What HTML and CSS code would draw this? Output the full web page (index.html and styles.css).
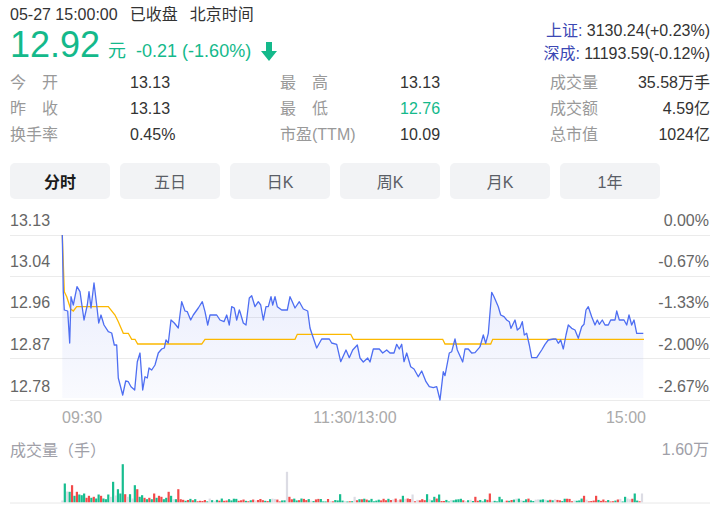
FILE: index.html
```html
<!DOCTYPE html>
<html lang="zh-CN">
<head>
<meta charset="utf-8">
<title>分时</title>
<link rel="stylesheet" href="styles.css">
</head>
<body>
<header class="head">
  <div class="head-left">
    <div class="status"><span>05-27 15:00:00</span><span class="gap">已收盘</span><span class="gap">北京时间</span></div>
    <div class="price-row">
      <span class="price">12.92</span><span class="unit">元</span><span class="change">-0.21 (-1.60%)</span>
      <svg class="arrow" width="16" height="19" viewBox="0 0 16 19"><path d="M5 0h6v9h5l-8 10l-8-10h5z"/></svg>
    </div>
  </div>
  <div class="head-right">
    <div><span class="idx">上证:</span> 3130.24(+0.23%)</div>
    <div><span class="idx">深成:</span> 11193.59(-0.12%)</div>
  </div>
</header>

<div class="stats">
  <span class="label">今&#12288;开</span><span class="value">13.13</span>
  <span class="label">最&#12288;高</span><span class="value">13.13</span>
  <span class="label">成交量</span><span class="value end">35.58万手</span>
  <span class="label">昨&#12288;收</span><span class="value">13.13</span>
  <span class="label">最&#12288;低</span><span class="value down">12.76</span>
  <span class="label">成交额</span><span class="value end">4.59亿</span>
  <span class="label">换手率</span><span class="value">0.45%</span>
  <span class="label">市盈(TTM)</span><span class="value">10.09</span>
  <span class="label">总市值</span><span class="value end">1024亿</span>
</div>

<nav class="tabs">
  <div class="tab active">分时</div>
  <div class="tab">五日</div>
  <div class="tab">日K</div>
  <div class="tab">周K</div>
  <div class="tab">月K</div>
  <div class="tab">1年</div>
</nav>

<svg class="chart" width="726" height="311" viewBox="0 205 726 311">
  <defs>
    <linearGradient id="areaFill" x1="0" y1="0" x2="0" y2="1">
      <stop offset="0" stop-color="#4664eb" stop-opacity="0.14"/>
      <stop offset="1" stop-color="#4664eb" stop-opacity="0.03"/>
    </linearGradient>
  </defs>
  <g class="grid">
    <line x1="10" y1="235.5" x2="710" y2="235.5"/>
    <line x1="10" y1="276.5" x2="710" y2="276.5"/>
    <line x1="10" y1="317.5" x2="710" y2="317.5"/>
    <line x1="10" y1="358.5" x2="710" y2="358.5"/>
    <line x1="10" y1="400.5" x2="710" y2="400.5"/>
  </g>
  <polygon class="area" points="62.3,235 63.3,291.7 64.3,310 67.7,311 69.7,343 71,296.7 73.3,305 77,286.7 80,291.7 84,320 87.3,305 89,291.7 91,308 94,283 96.7,305 98.7,323 101,315 104,325 108.3,331.7 111.7,333 114.3,345 116.7,345 118.3,378 122.7,395 125.7,381 128.3,381.7 131,386.7 134.7,390 137.3,361.7 140,353 142.7,390 145,376.7 147.3,378 149,368 151.7,370 155,365 158.3,353 161.7,349 164.3,348 166,340 168.3,343 171,320 174.3,323 178.3,328 181.7,301.7 185,311 187.3,311.7 190.7,320 193.3,315 198.3,308 202.3,301.7 205,311.7 207.7,325 210,315 216.7,315 220,320 224,321.7 226.7,315 229.3,325 231.7,306.7 234.3,308 236.7,320 239.3,310 240,311.7 243.3,323 246,325 249.3,298 251.7,295.7 255,306.7 258.3,301.7 260.7,305 263.3,320 266,306.7 268.3,306.7 271,296.7 272.7,305 275,296.7 277.3,306.7 281.7,310 287.3,310 290,296.7 292.3,301.7 295,308 299.3,301.7 303.3,309 307.7,311 310,328 312.3,335 316.7,348 321.7,339 329.3,339 331.7,343 336.7,344.3 340.7,361.7 346,350 349.3,357.7 352.7,350 357.3,345 360,358 363.3,362 367.7,358 370,362 373.3,349 379.3,349 382.7,353 386.7,350 390,353 394,353 396.7,344.3 399.3,349 401.7,344.3 404,361.7 406.7,353 410.7,366.7 414,369 418.3,376.7 421.7,371 426,381.7 429.3,386.7 433.3,387.7 436.7,386.7 440,400 443.3,371.7 445,375.7 449.3,353 451.7,351.7 455,339 457.3,350 462.7,362 465,349 468.3,349 471.7,353 475,352.7 479.3,347.7 480,346.7 483.3,335 485.7,343.3 488.3,333.3 491.7,292.3 494,296.7 498.3,306.7 500.7,315 504,316.7 506.7,320 509.3,321.7 511,328.3 515,320 517.3,330 520,327.7 522.3,321.7 524.3,335 526.7,333.3 529.3,345 531.7,357.7 536.7,357.7 541.7,350 545,344.3 548.3,340 553.3,339 556,339 558.3,343.3 560.7,340 563.3,349 566,335 568.3,325 571.7,328.3 575,330 578.3,338.3 581.7,326.7 584,324.3 586,310 588.3,306.7 591.7,316.7 595,325 597.3,320 599.3,324.3 602.3,320 605,325 608.3,325 610.7,320 615,320 616.7,311 619.3,320 624,320 626.7,325 629,315 631.7,325 634,320 636.7,333.3 643.3,333.3 643.3,398 62.3,398"/>
  <polyline class="avg" points="62.3,235 64.3,291.7 66.7,296.7 70.7,309 73.3,311 76.7,306.7 108.3,306.7 115,315 118.3,321.7 123.3,333.3 128.3,333.3 131.7,339.3 135,339.3 137.7,344 201.7,344 205,339.3 295,339.3 297.3,334.3 350.7,334.3 353.3,339.3 442.7,339.3 445,344 490.7,344 492.7,339.3 644,339.3"/>
  <polyline class="line" points="62.3,235 63.3,291.7 64.3,310 67.7,311 69.7,343 71,296.7 73.3,305 77,286.7 80,291.7 84,320 87.3,305 89,291.7 91,308 94,283 96.7,305 98.7,323 101,315 104,325 108.3,331.7 111.7,333 114.3,345 116.7,345 118.3,378 122.7,395 125.7,381 128.3,381.7 131,386.7 134.7,390 137.3,361.7 140,353 142.7,390 145,376.7 147.3,378 149,368 151.7,370 155,365 158.3,353 161.7,349 164.3,348 166,340 168.3,343 171,320 174.3,323 178.3,328 181.7,301.7 185,311 187.3,311.7 190.7,320 193.3,315 198.3,308 202.3,301.7 205,311.7 207.7,325 210,315 216.7,315 220,320 224,321.7 226.7,315 229.3,325 231.7,306.7 234.3,308 236.7,320 239.3,310 240,311.7 243.3,323 246,325 249.3,298 251.7,295.7 255,306.7 258.3,301.7 260.7,305 263.3,320 266,306.7 268.3,306.7 271,296.7 272.7,305 275,296.7 277.3,306.7 281.7,310 287.3,310 290,296.7 292.3,301.7 295,308 299.3,301.7 303.3,309 307.7,311 310,328 312.3,335 316.7,348 321.7,339 329.3,339 331.7,343 336.7,344.3 340.7,361.7 346,350 349.3,357.7 352.7,350 357.3,345 360,358 363.3,362 367.7,358 370,362 373.3,349 379.3,349 382.7,353 386.7,350 390,353 394,353 396.7,344.3 399.3,349 401.7,344.3 404,361.7 406.7,353 410.7,366.7 414,369 418.3,376.7 421.7,371 426,381.7 429.3,386.7 433.3,387.7 436.7,386.7 440,400 443.3,371.7 445,375.7 449.3,353 451.7,351.7 455,339 457.3,350 462.7,362 465,349 468.3,349 471.7,353 475,352.7 479.3,347.7 480,346.7 483.3,335 485.7,343.3 488.3,333.3 491.7,292.3 494,296.7 498.3,306.7 500.7,315 504,316.7 506.7,320 509.3,321.7 511,328.3 515,320 517.3,330 520,327.7 522.3,321.7 524.3,335 526.7,333.3 529.3,345 531.7,357.7 536.7,357.7 541.7,350 545,344.3 548.3,340 553.3,339 556,339 558.3,343.3 560.7,340 563.3,349 566,335 568.3,325 571.7,328.3 575,330 578.3,338.3 581.7,326.7 584,324.3 586,310 588.3,306.7 591.7,316.7 595,325 597.3,320 599.3,324.3 602.3,320 605,325 608.3,325 610.7,320 615,320 616.7,311 619.3,320 624,320 626.7,325 629,315 631.7,325 634,320 636.7,333.3 643.3,333.3"/>
  <g class="axis">
    <text x="10" y="226">13.13</text>
    <text x="10" y="267">13.04</text>
    <text x="10" y="308">12.96</text>
    <text x="10" y="350">12.87</text>
    <text x="10" y="391.5">12.78</text>
  </g>
  <g class="axis end">
    <text x="709" y="226">0.00%</text>
    <text x="709" y="267">-0.67%</text>
    <text x="709" y="308">-1.33%</text>
    <text x="709" y="350">-2.00%</text>
    <text x="709" y="391.5">-2.67%</text>
  </g>
  <g class="time">
    <text x="62" y="423">09:30</text>
    <text x="355" y="423" text-anchor="middle">11:30/13:00</text>
    <text x="646" y="423" text-anchor="end">15:00</text>
  </g>
  <text class="vol-label" x="10" y="455.5">成交量（手）</text>
  <text class="vol-label" x="709" y="455" text-anchor="end">1.60万</text>
  <g class="vol-bars" id="volBars"></g>
  <line class="vol-base" x1="10" y1="503" x2="710" y2="503"/>
</svg>
<script src="script.js"></script>
</body>
</html>
```

FILE: styles.css
```css
* {
  box-sizing: border-box;
  margin: 0;
  padding: 0;
}

body {
  margin: 0;
  width: 726px;
  height: 516px;
  overflow: hidden;
  background: #fff;
  font-family: "Liberation Sans", Arial, "Noto Sans CJK SC", sans-serif;
  font-size: 16px;
  color: #333;
}

.head {
  display: flex;
  justify-content: space-between;
  height: 65px;
  padding: 5px 16px 0 10px;
}

.status {
  line-height: 20px;
  color: #333;
  white-space: nowrap;
}

.status .gap {
  margin-left: 12px;
}

.price-row {
  display: flex;
  align-items: baseline;
  height: 40px;
  color: #14b98b;
  white-space: nowrap;
}

.price {
  font-size: 36px;
  line-height: 40px;
}

.unit {
  font-size: 18px;
  line-height: 20px;
  margin-left: 8px;
}

.change {
  font-size: 18px;
  line-height: 20px;
  margin-left: 10px;
}

.arrow {
  align-self: flex-start;
  margin: 17px 0 0 10px;
  fill: #14b98b;
}

.head-right {
  padding-top: 14px;
  line-height: 23px;
  text-align: right;
  white-space: nowrap;
  color: #333;
}

.idx {
  color: #3c48b4;
}

.stats {
  display: grid;
  grid-template-columns: 120px 150px 120px 150px 1fr auto;
  grid-auto-rows: 26px;
  align-items: center;
  margin-top: 5px;
  padding: 0 16px 0 10px;
  line-height: 20px;
  white-space: nowrap;
}

.label {
  color: #999;
}

.value {
  color: #333;
}

.value.down {
  color: #14b98b;
}

.value.end {
  text-align: right;
}

.tabs {
  display: flex;
  gap: 10px;
  margin-top: 15px;
  padding: 0 10px;
}

.tab {
  width: 100px;
  height: 36px;
  border-radius: 5px;
  background: #f2f3f5;
  display: flex;
  align-items: center;
  justify-content: center;
  color: #5a5e66;
}

.tab.active {
  color: #1a1a1a;
  font-weight: bold;
}

.chart {
  display: block;
  margin-top: 6px;
}

.grid line {
  stroke: #ebebeb;
  stroke-width: 1;
}

.area {
  fill: url(#areaFill);
  stroke: none;
}

.line {
  fill: none;
  stroke: #4e6ef2;
  stroke-width: 1.3;
  stroke-linejoin: round;
}

.avg {
  fill: none;
  stroke: #fcb800;
  stroke-width: 1.3;
}

.axis text {
  font-size: 16px;
  fill: #666;
}

.axis.end text {
  text-anchor: end;
}

.time text {
  font-size: 16px;
  fill: #aaa;
}

.vol-label {
  font-size: 16px;
  fill: #a0a0a8;
}

.vol-base {
  stroke: #e8e8e8;
  stroke-width: 1;
}
```

FILE: script.js
```js
(function () {
  var g = document.getElementById('volBars');
  var NS = 'http://www.w3.org/2000/svg';
  var colors = { G: '#17bd8f', R: '#f24a4a', L: '#dcdce4' };
  var head = [
    [2, 'L'], [19, 'G'], [11, 'L'], [10.7, 'G'], [17.3, 'R'], [6.7, 'G'], [10.7, 'R'], [8, 'G'], [7.3, 'G'], [9, 'G'],
    [4.7, 'R'], [6.7, 'R'], [4.7, 'G'], [5.7, 'R'], [4, 'G'], [8, 'G'], [6.7, 'R'], [4, 'G'], [3.3, 'G'], [8, 'G'],
    [5.7, 'L'], [20.7, 'G'], [7, 'L'], [13.3, 'G'], [9, 'G'], [38.3, 'G'], [8.3, 'R'], [5.7, 'L'], [8.3, 'G'], [4, 'L'],
    [17.3, 'G'], [13.3, 'R'], [5.7, 'G'], [7.3, 'G'], [4.7, 'R'], [3.3, 'G'], [4.7, 'R'], [3.3, 'G'], [9, 'R'], [4.7, 'G'],
    [6.7, 'R'], [5.7, 'R'], [3.3, 'G'], [4.7, 'G'], [10.7, 'R'], [6.7, 'G'], [3.3, 'L'], [3.3, 'G'], [13.3, 'R'], [3.3, 'R']
  ];
  var over = {
    93: [30.7, 'L'], 94: [5.7, 'R'], 115: [8.3, 'G'], 121: [5.7, 'L'], 141: [6.7, 'G'], 145: [8, 'L'],
    151: [8.3, 'G'], 154: [5.7, 'G'], 156: [8, 'G'], 171: [5.7, 'R'], 177: [9, 'R'], 181: [5.7, 'G'],
    216: [6.7, 'R'], 221: [6.7, 'R'], 233: [5.7, 'G'], 237: [9, 'G'], 240: [9, 'L']
  };
  var seed = 7;
  function rnd() {
    seed = (seed * 9301 + 49297) % 233280;
    return seed / 233280;
  }
  for (var i = 0; i < 241; i++) {
    var d;
    if (i < head.length) {
      d = head[i];
    } else if (over[i]) {
      d = over[i];
    } else {
      var r = rnd();
      var h = 1 + rnd() * 3;
      d = [h, r < 0.42 ? 'G' : (r < 0.78 ? 'R' : 'L')];
    }
    var rect = document.createElementNS(NS, 'rect');
    rect.setAttribute('x', (61.3 + i * 2.415).toFixed(2));
    rect.setAttribute('y', (502.5 - d[0]).toFixed(2));
    rect.setAttribute('width', '2.2');
    rect.setAttribute('height', d[0].toFixed(2));
    rect.setAttribute('fill', colors[d[1]]);
    g.appendChild(rect);
  }
})();
```
